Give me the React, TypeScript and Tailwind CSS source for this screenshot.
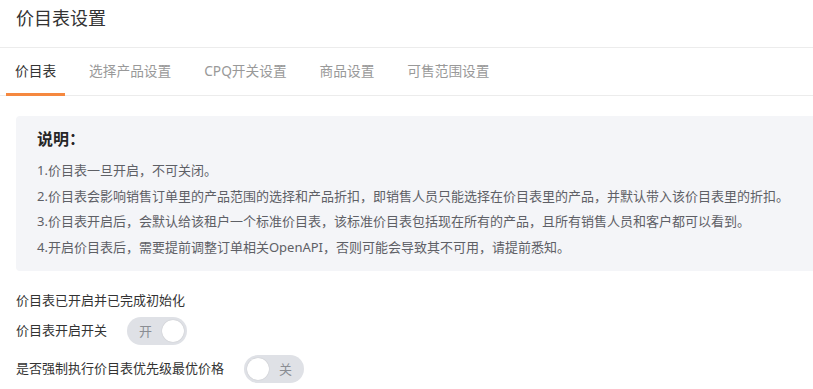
import React from "react";

const font = { fontFamily: '"Noto Sans", "Noto Sans CJK SC", sans-serif' };

function Toggle({ on, label }: { on: boolean; label: string }) {
  return (
    <div className="relative h-[28px] w-[60px] rounded-full bg-[#dfe1e6] shrink-0">
      <div
        className={
          on
            ? "absolute right-[3px] top-[3px] h-[22px] w-[22px] rounded-full bg-white shadow-[0_0_1px_rgba(0,0,0,0.25)]"
            : "absolute left-[3px] top-[3px] h-[22px] w-[22px] rounded-full bg-white shadow-[0_0_1px_rgba(0,0,0,0.25)]"
        }
      />
      <span
        className={
          on
            ? "absolute left-[12px] top-0 text-[13px] leading-[28px] text-[#8a8d93]"
            : "absolute right-[12px] top-0 text-[13px] leading-[28px] text-[#8a8d93]"
        }
      >
        {label}
      </span>
    </div>
  );
}

export default function App() {
  const tabs = ["价目表", "选择产品设置", "CPQ开关设置", "商品设置", "可售范围设置"];
  return (
    <div className="w-[813px] h-[389px] overflow-hidden bg-white" style={font}>
      <div className="h-[48px] border-b border-[#ececec] pl-4 pt-[5px]">
        <div className="text-[18px] leading-[26px] text-[#333]">价目表设置</div>
      </div>
      <div className="flex h-[48px] border-b border-[#ececec] pl-[6px] gap-[15px]">
        {tabs.map((t, i) => (
          <div
            key={t}
            className={
              i === 0
                ? "flex items-center px-[9px] text-[13.7px] text-[#333] border-b-[3px] border-[#f5883f] -mb-px pt-[2px]"
                : "flex items-center px-[9px] text-[13.7px] text-[#999]"
            }
          >
            {t}
          </div>
        ))}
      </div>
      <div className="ml-4 mr-[-20px] mt-[20px] rounded bg-[#f4f5f8] pl-[21px] pt-[12px] pb-[10px]">
        <div className="text-[16px] font-bold leading-[22px] text-[#262626] mb-[8px]">说明：</div>
        <div className="text-[13px] leading-[25.67px] text-[#5e6066]">
          <div>1.价目表一旦开启，不可关闭。</div>
          <div>2.价目表会影响销售订单里的产品范围的选择和产品折扣，即销售人员只能选择在价目表里的产品，并默认带入该价目表里的折扣。</div>
          <div>3.价目表开启后，会默认给该租户一个标准价目表，该标准价目表包括现在所有的产品，且所有销售人员和客户都可以看到。</div>
          <div>4.开启价目表后，需要提前调整订单相关OpenAPI，否则可能会导致其不可用，请提前悉知。</div>
        </div>
      </div>
      <div className="pl-4 mt-[19px] text-[13px] text-[#333]">
        <div className="leading-[20px]">价目表已开启并已完成初始化</div>
        <div className="flex items-center gap-5 mt-[7px]">
          <span>价目表开启开关</span>
          <Toggle on={true} label="开" />
        </div>
        <div className="flex items-center gap-5 mt-[10px]">
          <span>是否强制执行价目表优先级最优价格</span>
          <Toggle on={false} label="关" />
        </div>
      </div>
    </div>
  );
}
